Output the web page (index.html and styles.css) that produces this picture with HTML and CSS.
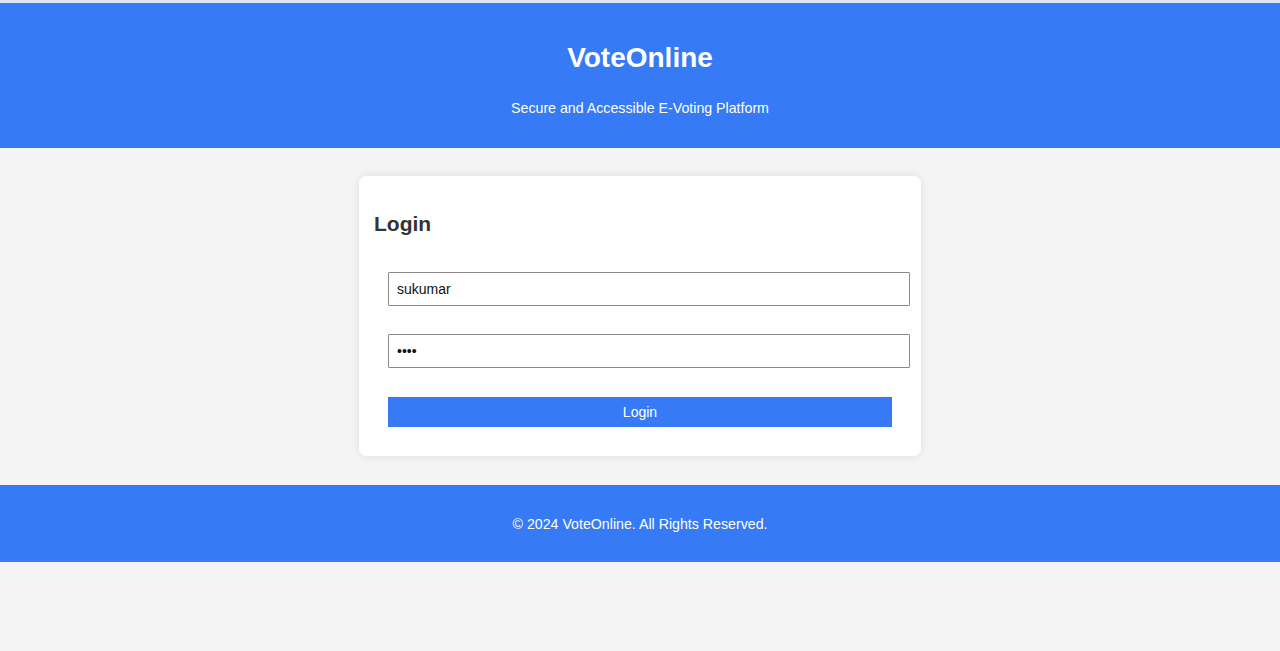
FILE: index.html
```html
<!DOCTYPE html>
<html lang="en">
<head>
<meta charset="utf-8">
<title>VoteOnline</title>
<link rel="stylesheet" href="styles.css">
</head>
<body>
<header class="site-header">
  <h1 class="brand">VoteOnline</h1>
  <p class="tagline">Secure and Accessible E-Voting Platform</p>
</header>
<main class="content">
  <section class="card">
    <h2 class="card-title">Login</h2>
    <form class="login-form">
      <input class="field" type="text" value="sukumar">
      <input class="field" type="password" value="abcd">
      <button class="btn" type="button">Login</button>
    </form>
  </section>
</main>
<footer class="site-footer">
  <p class="copy">© 2024 VoteOnline. All Rights Reserved.</p>
</footer>
</body>
</html>
```

FILE: styles.css
```css
html, body {
  margin: 0;
  padding: 0;
}
body {
  background: #f4f4f4;
  font-family: "Liberation Sans", Arial, sans-serif;
  color: #333;
}
.site-header {
  background: #367af6;
  border-top: 3px solid #dce5f1;
  height: 148px;
  box-sizing: border-box;
  color: #fff;
  text-align: center;
  display: flex;
  flex-direction: column;
  align-items: center;
  padding-top: 39px;
}
.brand {
  margin: 0;
  font-size: 28px;
  line-height: 32px;
  font-weight: bold;
}
.tagline {
  margin: 26px 0 0;
  font-size: 14.2px;
  line-height: 16px;
}
.content {
  padding: 28px 0 29px;
  display: flex;
  justify-content: center;
}
.card {
  width: 562px;
  height: 280px;
  box-sizing: border-box;
  background: #fff;
  border-radius: 7px;
  box-shadow: 0 0 9px rgba(0, 0, 0, 0.09);
  padding: 36px 14px 0 15px;
}
.card-title {
  margin: 0;
  font-size: 21px;
  line-height: 24px;
  font-weight: bold;
  color: #333;
}
.login-form {
  display: flex;
  flex-direction: column;
  align-items: flex-start;
  padding-left: 14px;
  margin-top: 36px;
}
.field {
  width: 522px;
  height: 34px;
  box-sizing: border-box;
  border: 1px solid #8a8a8a;
  border-radius: 1px;
  padding: 0 8px;
  font-family: "Liberation Sans", Arial, sans-serif;
  font-size: 14px;
  color: #111;
  background: #fff;
  margin: 0 0 28px;
}
.field + .field {
  margin-bottom: 29px;
}
.btn {
  width: 504px;
  height: 30px;
  border: none;
  background: #367af6;
  color: #fff;
  font-family: "Liberation Sans", Arial, sans-serif;
  font-size: 14px;
  padding: 0;
}
.site-footer {
  background: #367af6;
  height: 77px;
  color: #fff;
  display: flex;
  align-items: center;
  justify-content: center;
}
.copy {
  margin: 0;
  font-size: 14.2px;
}
```
